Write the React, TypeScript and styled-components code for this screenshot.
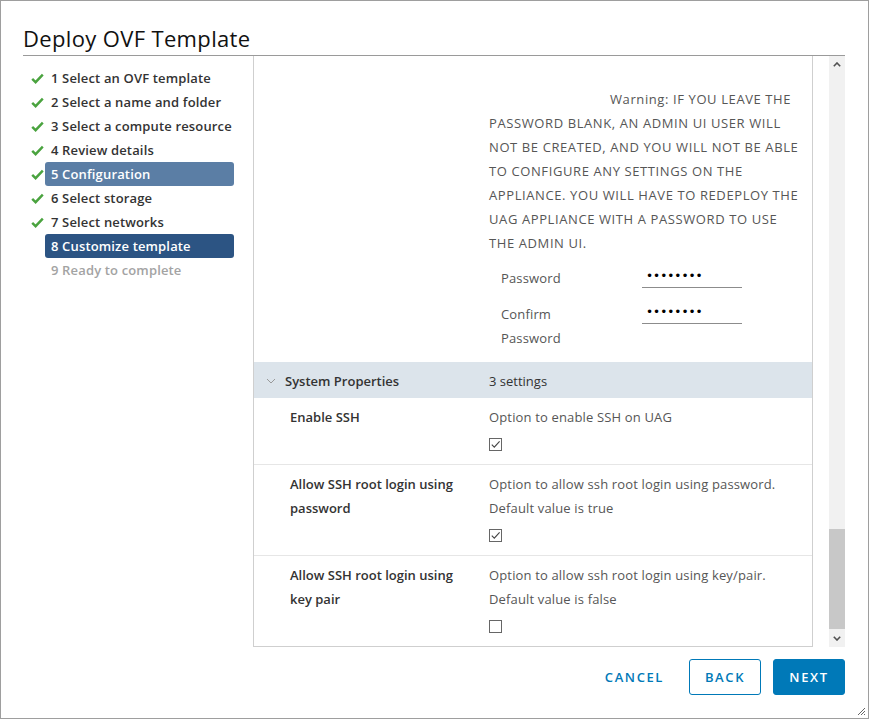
import React from "react";
import styled, { createGlobalStyle } from "styled-components";

const GlobalStyle = createGlobalStyle`
  html, body {
    margin: 0;
    padding: 0;
    background: #fff;
  }
  body {
    font-family: "Open Sans", "Liberation Sans", sans-serif;
    color: #333;
  }
  * {
    box-sizing: border-box;
  }
`;

interface Step {
  label: string;
  done: boolean;
  state?: "visited" | "current" | "todo";
}

const steps: Step[] = [
  { label: "1 Select an OVF template", done: true },
  { label: "2 Select a name and folder", done: true },
  { label: "3 Select a compute resource", done: true },
  { label: "4 Review details", done: true },
  { label: "5 Configuration", done: true, state: "visited" },
  { label: "6 Select storage", done: true },
  { label: "7 Select networks", done: true },
  { label: "8 Customize template", done: false, state: "current" },
  { label: "9 Ready to complete", done: false, state: "todo" },
];

const warningLines = [
  "Warning: IF YOU LEAVE THE",
  "PASSWORD BLANK, AN ADMIN UI USER WILL",
  "NOT BE CREATED, AND YOU WILL NOT BE ABLE",
  "TO CONFIGURE ANY SETTINGS ON THE",
  "APPLIANCE. YOU WILL HAVE TO REDEPLOY THE",
  "UAG APPLIANCE WITH A PASSWORD TO USE",
  "THE ADMIN UI.",
];

interface SshProp {
  label: string[];
  desc: string[];
  checked: boolean;
}

const sshProps: SshProp[] = [
  { label: ["Enable SSH"], desc: ["Option to enable SSH on UAG"], checked: true },
  {
    label: ["Allow SSH root login using", "password"],
    desc: ["Option to allow ssh root login using password.", "Default value is true"],
    checked: true,
  },
  {
    label: ["Allow SSH root login using", "key pair"],
    desc: ["Option to allow ssh root login using key/pair.", "Default value is false"],
    checked: false,
  },
];

const CheckMark = () => (
  <svg width="13" height="11" viewBox="0 0 13 11">
    <path d="M1.2 5.8 L4.6 9.2 L11.8 1.6" fill="none" stroke="#4aa33f" strokeWidth="2.4" />
  </svg>
);

const Checkbox: React.FC<{ checked: boolean }> = ({ checked }) => (
  <Box>
    {checked && (
      <svg width="11" height="11" viewBox="0 0 11 11">
        <path d="M1.8 5.6 L4.3 8.2 L9.6 2.4" fill="none" stroke="#444" strokeWidth="1.1" />
      </svg>
    )}
  </Box>
);

const App: React.FC = () => {
  return (
    <>
      <GlobalStyle />
      <Dialog>
        <Header>
          <Title>Deploy OVF Template</Title>
        </Header>
        <Body>
          <Nav>
            {steps.map((s) => (
              <NavItem key={s.label}>
                <CheckSlot>{s.done && <CheckMark />}</CheckSlot>
                <NavLabel state={s.state}>{s.label}</NavLabel>
              </NavItem>
            ))}
          </Nav>
          <Pane>
            <PropRow top={31}>
              <PropLabel />
              <PropDesc>
                {warningLines.map((l, i) => (
                  <TextLine key={l} indent={i === 0 ? 121 : 0} caps>
                    {l}
                  </TextLine>
                ))}
                <PwForm>
                  <PwRow>
                    <PwLabel>
                      <TextLine>Password</TextLine>
                    </PwLabel>
                    <PwInput type="password" value="12345678" readOnly />
                  </PwRow>
                  <PwRow>
                    <PwLabel>
                      <TextLine>Confirm</TextLine>
                      <TextLine>Password</TextLine>
                    </PwLabel>
                    <PwInput type="password" value="12345678" readOnly />
                  </PwRow>
                </PwForm>
              </PropDesc>
            </PropRow>
            <GroupHeader>
              <GroupName>
                <svg width="10" height="6" viewBox="0 0 10 6">
                  <polyline points="1,1 5,5 9,1" fill="none" stroke="#999" strokeWidth="1" />
                </svg>
                System Properties
              </GroupName>
              <GroupCount>3 settings</GroupCount>
            </GroupHeader>
            {sshProps.map((p, i) => (
              <PropRow key={p.desc[0]} divider={i < sshProps.length - 1}>
                <PropLabel bold>
                  {p.label.map((l) => (
                    <TextLine key={l}>{l}</TextLine>
                  ))}
                </PropLabel>
                <PropDesc>
                  {p.desc.map((d) => (
                    <TextLine key={d}>{d}</TextLine>
                  ))}
                  <CheckWrap>
                    <Checkbox checked={p.checked} />
                  </CheckWrap>
                </PropDesc>
              </PropRow>
            ))}
          </Pane>
          <ScrollBar>
            <ScrollArrow>
              <svg width="8" height="5" viewBox="0 0 8 5">
                <polyline points="0.8,4.2 4,1 7.2,4.2" fill="none" stroke="#505050" strokeWidth="1.6" />
              </svg>
            </ScrollArrow>
            <ScrollTrack>
              <ScrollThumb />
            </ScrollTrack>
            <ScrollArrow>
              <svg width="8" height="5" viewBox="0 0 8 5">
                <polyline points="0.8,0.8 4,4 7.2,0.8" fill="none" stroke="#505050" strokeWidth="1.6" />
              </svg>
            </ScrollArrow>
          </ScrollBar>
        </Body>
        <Footer>
          <FlatButton>CANCEL</FlatButton>
          <OutlineButton>BACK</OutlineButton>
          <PrimaryButton>NEXT</PrimaryButton>
          <Grip>
            <svg width="9" height="9" viewBox="0 0 9 9">
              <path d="M8 1 L1 8 M8 4 L4 8 M8 7 L7 8" stroke="#666" strokeWidth="1" />
            </svg>
          </Grip>
        </Footer>
      </Dialog>
    </>
  );
};

export default App;

const Dialog = styled.div`
  position: relative;
  width: 869px;
  height: 719px;
  border: 1px solid #9e9e9e;
  display: flex;
  flex-direction: column;
  background: #fff;
`;

const Header = styled.div`
  height: 55px;
  margin: 0 23px 0 22px;
  border-bottom: 1px solid #9a9a9a;
`;

const Title = styled.h1`
  margin: 0;
  padding-top: 22px;
  font-size: 22px;
  line-height: 30px;
  font-weight: 400;
  color: #111;
  letter-spacing: 0.35px;
`;

const Body = styled.div`
  display: flex;
  height: 591px;
  padding: 0 23px 0 22px;
`;

const Nav = styled.div`
  width: 230px;
  flex-shrink: 0;
  padding-top: 10px;
  display: flex;
  flex-direction: column;
`;

const NavItem = styled.div`
  display: flex;
  align-items: center;
  height: 24px;
  padding-left: 8px;
`;

const CheckSlot = styled.div`
  width: 14px;
  height: 24px;
  display: flex;
  align-items: center;
`;

const NavLabel = styled.div<{ state?: "visited" | "current" | "todo" }>`
  width: 189px;
  height: 24px;
  line-height: 24px;
  padding: 0 6px;
  border-radius: 3px;
  font-size: 13px;
  font-weight: 600;
  letter-spacing: 0.15px;
  white-space: nowrap;
  color: ${(p) => (p.state === "todo" ? "#a3a3a3" : p.state ? "#fff" : "#333")};
  background: ${(p) =>
    p.state === "visited" ? "#5b7ea5" : p.state === "current" ? "#2c5483" : "transparent"};
`;

const Pane = styled.div`
  width: 560px;
  flex-shrink: 0;
  height: 591px;
  overflow: hidden;
  border: 1px solid #cfcfcf;
  border-top: none;
`;

const PropRow = styled.div<{ divider?: boolean; top?: number }>`
  display: grid;
  grid-template-columns: 235px 1fr;
  padding: ${(p) => p.top ?? 7}px 0 13px;
  border-bottom: ${(p) => (p.divider ? "1px solid #e6e6e6" : "none")};
`;

const PropLabel = styled.div<{ bold?: boolean }>`
  padding-left: 36px;
  font-size: 13px;
  font-weight: ${(p) => (p.bold ? 600 : 400)};
  color: ${(p) => (p.bold ? "#333" : "#565656")};
`;

const PropDesc = styled.div`
  padding-right: 10px;
  font-size: 13px;
  color: #565656;
  letter-spacing: 0.15px;
`;

const TextLine = styled.div<{ indent?: number; caps?: boolean }>`
  height: 24px;
  line-height: 24px;
  white-space: nowrap;
  padding-left: ${(p) => p.indent ?? 0}px;
  letter-spacing: ${(p) => (p.caps ? "0.6px" : "inherit")};
`;

const PwForm = styled.div`
  display: flex;
  flex-direction: column;
  gap: 12px;
  margin-top: 11px;
  margin-bottom: -1px;
  padding-left: 12px;
`;

const PwRow = styled.div`
  display: flex;
  align-items: flex-start;
`;

const PwLabel = styled.div`
  width: 141px;
  color: #565656;
`;

const PwInput = styled.input`
  width: 100px;
  height: 24px;
  margin-top: -2px;
  padding: 0 4px;
  border: none;
  border-bottom: 1px solid #8c8c8c;
  background: transparent;
  font-family: "DejaVu Sans", sans-serif;
  font-size: 12px;
  color: #000;
  outline: none;
`;

const GroupHeader = styled.div`
  display: grid;
  grid-template-columns: 235px 1fr;
  align-items: center;
  height: 36px;
  padding-top: 1px;
  background: #dce4eb;
  font-size: 13px;
  color: #333;
`;

const GroupName = styled.div`
  display: flex;
  align-items: center;
  gap: 9px;
  padding-left: 12px;
  font-weight: 600;
`;

const GroupCount = styled.div`
  color: #333;
`;

const CheckWrap = styled.div`
  margin-top: 9px;
  height: 13px;
  display: flex;
`;

const Box = styled.div`
  width: 13px;
  height: 13px;
  border: 1px solid #666;
  background: #fff;
  display: flex;
  align-items: center;
  justify-content: center;
`;

const ScrollBar = styled.div`
  width: 16px;
  margin-left: 16px;
  height: 591px;
  background: #f1f1f1;
  display: flex;
  flex-direction: column;
`;

const ScrollArrow = styled.div`
  height: 17px;
  display: flex;
  align-items: center;
  justify-content: center;
`;

const ScrollTrack = styled.div`
  flex: 1;
  display: flex;
  flex-direction: column;
  justify-content: flex-end;
  padding-bottom: 1px;
`;

const ScrollThumb = styled.div`
  height: 100px;
  background: #c8c8c8;
`;

const Footer = styled.div`
  position: relative;
  height: 71px;
  display: flex;
  justify-content: flex-end;
  align-items: flex-start;
  gap: 12px;
  padding: 12px 23px 0 0;
`;

const ButtonBase = styled.button`
  height: 36px;
  min-width: 72px;
  padding: 0 12px;
  border-radius: 3px;
  font-family: "Open Sans", "Liberation Sans", sans-serif;
  font-size: 13px;
  font-weight: 600;
  letter-spacing: 1.6px;
  cursor: pointer;
`;

const FlatButton = styled(ButtonBase)`
  border: 1px solid transparent;
  background: transparent;
  color: #0079b8;
`;

const OutlineButton = styled(ButtonBase)`
  border: 1px solid #0079b8;
  background: #fff;
  color: #0079b8;
`;

const PrimaryButton = styled(ButtonBase)`
  border: 1px solid #0079b8;
  background: #0079b8;
  color: #fff;
`;

const Grip = styled.div`
  position: absolute;
  right: 2px;
  bottom: 2px;
  width: 9px;
  height: 9px;
  display: flex;
`;
